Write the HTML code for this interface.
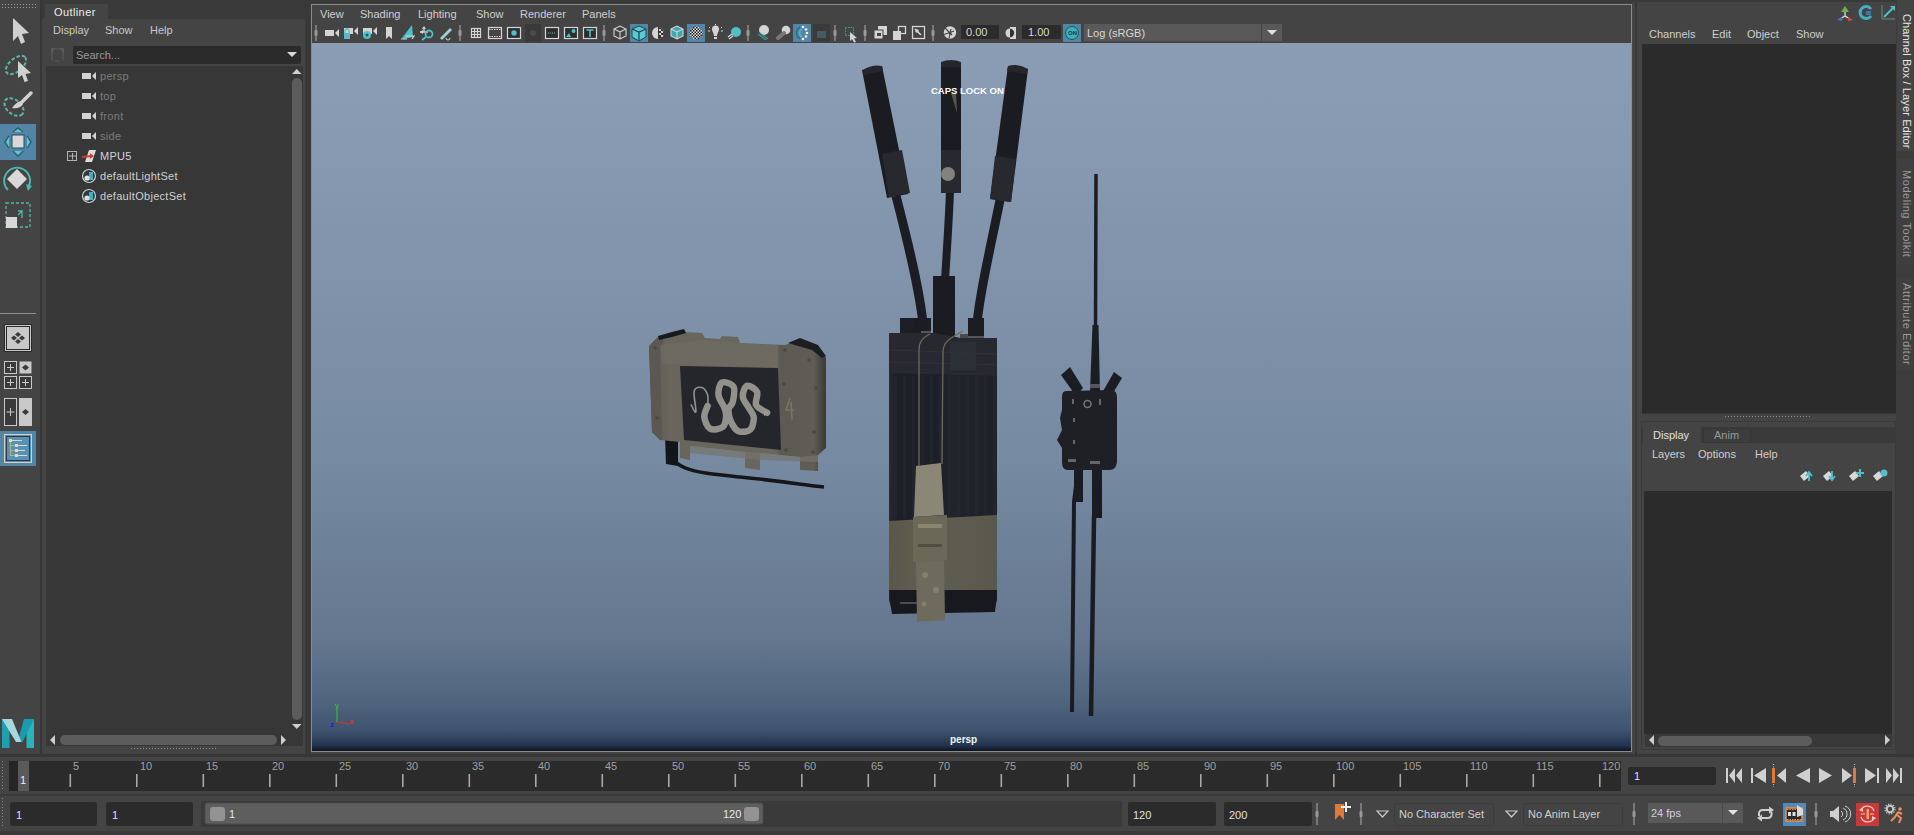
<!DOCTYPE html>
<html><head><meta charset="utf-8">
<style>
*{margin:0;padding:0;box-sizing:border-box}
html,body{width:1914px;height:835px;overflow:hidden;background:#444;font-family:"Liberation Sans",sans-serif;font-size:11px;color:#c8c8c8}
.a{position:absolute}
.t{position:absolute;white-space:nowrap;line-height:1}
svg{position:absolute;left:0;top:0}
</style></head><body>

<div class="a" style="left:0px;top:0px;width:1914px;height:835px;background:#444;"></div>
<div class="a" style="left:40px;top:0px;width:2px;height:755px;background:#363636;"></div>
<div class="a" style="left:42px;top:0px;width:264px;height:19px;background:#3a3a3a;"></div>
<div class="a" style="left:45px;top:4px;width:63px;height:15px;background:#444;border-radius:2px 2px 0 0"></div>
<div class="t" style="left:54px;top:7px;color:#ececec;font-size:11px;letter-spacing:0.4px">Outliner</div>
<div class="a" style="left:42px;top:19px;width:264px;height:736px;background:#444;"></div>
<div class="t" style="left:53px;top:25px;color:#c8c8c8;font-size:11px;">Display</div>
<div class="t" style="left:105px;top:25px;color:#c8c8c8;font-size:11px;">Show</div>
<div class="t" style="left:150px;top:25px;color:#c8c8c8;font-size:11px;">Help</div>
<div class="a" style="left:73px;top:46px;width:228px;height:18px;background:#2b2b2b;border-radius:2px"></div>
<div class="t" style="left:76px;top:50px;color:#9a9a9a;font-size:11px;">Search...</div>
<div class="a" style="left:46px;top:66px;width:257px;height:680px;background:#373737;"></div>
<div class="a" style="left:305px;top:0px;width:6px;height:755px;background:#393939;"></div>
<div class="a" style="left:306px;top:0px;width:1326px;height:4px;background:#3a3a3a;"></div>
<div class="a" style="left:311px;top:4px;width:1321px;height:748px;background:#444;border:1px solid #8c8c8c"></div>
<div class="a" style="left:312px;top:43px;width:1319px;height:708px;background:linear-gradient(#8a9db4 0px,#8699b0 117px,#7d90a8 297px,#768aa2 417px,#64778f 597px,#52657f 657px,#3f5470 687px,#243450 702px,#0e1420 708px);"></div>
<div class="a" style="left:1632px;top:0px;width:4px;height:755px;background:#444;"></div>
<div class="a" style="left:1635px;top:0px;width:2px;height:755px;background:#383838;"></div>
<div class="a" style="left:1637px;top:0px;width:5px;height:755px;background:#444;"></div>
<div class="a" style="left:1632px;top:0px;width:282px;height:2px;background:#3a3a3a;"></div>
<div class="a" style="left:1642px;top:413px;width:254px;height:1px;background:#333;"></div>
<div class="a" style="left:1642px;top:44px;width:254px;height:369px;background:#2b2b2b;"></div>
<div class="a" style="left:1642px;top:427px;width:254px;height:16px;background:#3a3a3a;"></div>
<div class="a" style="left:1643px;top:427px;width:58px;height:16px;background:#444;"></div>
<div class="a" style="left:1703px;top:428px;width:48px;height:15px;background:#3d3d3d;border:1px solid #353535"></div>
<div class="a" style="left:1644px;top:491px;width:248px;height:243px;background:#2b2b2b;"></div>
<div class="a" style="left:1645px;top:734px;width:247px;height:13px;background:#393939;"></div>
<div class="a" style="left:1896px;top:0px;width:18px;height:755px;background:#3c3c3c;"></div>
<div class="a" style="left:0px;top:754px;width:1914px;height:3px;background:#363636;"></div>
<div class="a" style="left:9px;top:761px;width:1612px;height:30px;background:#2b2b2b;"></div>
<div class="a" style="left:0px;top:794px;width:1914px;height:2px;background:#3a3a3a;"></div>
<div class="a" style="left:0px;top:831px;width:1914px;height:4px;background:#3a3a3a;"></div>
<div class="t" style="left:100px;top:71px;color:#7c7c7c;font-size:11px;letter-spacing:0.3px">persp</div>
<div class="t" style="left:100px;top:91px;color:#7c7c7c;font-size:11px;letter-spacing:0.3px">top</div>
<div class="t" style="left:100px;top:111px;color:#7c7c7c;font-size:11px;letter-spacing:0.3px">front</div>
<div class="t" style="left:100px;top:131px;color:#7c7c7c;font-size:11px;letter-spacing:0.3px">side</div>
<div class="t" style="left:100px;top:151px;color:#cfd0e0;font-size:11px;letter-spacing:0.3px">MPU5</div>
<div class="t" style="left:100px;top:171px;color:#d0d0d0;font-size:11px;letter-spacing:0.3px">defaultLightSet</div>
<div class="t" style="left:100px;top:191px;color:#d0d0d0;font-size:11px;letter-spacing:0.3px">defaultObjectSet</div>
<svg width="1914" height="835"><rect x="82" y="73" width="9" height="6" fill="#d2d2d2"/><path d="M92 76 L96 72 L96 80 Z" fill="#d2d2d2"/><rect x="82" y="93" width="9" height="6" fill="#d2d2d2"/><path d="M92 96 L96 92 L96 100 Z" fill="#d2d2d2"/><rect x="82" y="113" width="9" height="6" fill="#d2d2d2"/><path d="M92 116 L96 112 L96 120 Z" fill="#d2d2d2"/><rect x="82" y="133" width="9" height="6" fill="#d2d2d2"/><path d="M92 136 L96 132 L96 140 Z" fill="#d2d2d2"/><rect x="67.5" y="151.5" width="9" height="9" fill="none" stroke="#b4b4b4" stroke-width="1"/><path d="M69 156 H76 M72.5 153 V159.5" stroke="#b4b4b4" stroke-width="1"/><path d="M85 162 L89 150 L96 150 L92 162 Z" fill="#dcdcdc"/><path d="M82 157 L92 156" stroke="#d23a3a" stroke-width="1.8"/><path d="M90 153 L94 156 L90 159 Z" fill="#d23a3a"/><circle cx="89" cy="176" r="6.5" fill="#2e3a3e" stroke="#d0d0d0" stroke-width="1.2"/><path d="M89 172 L93 172 L93 180 L89 180 Z" fill="#3fb0c0"/><circle cx="87" cy="178" r="2.6" fill="#e0e0e0"/><circle cx="89" cy="196" r="6.5" fill="#2e3a3e" stroke="#d0d0d0" stroke-width="1.2"/><path d="M89 192 L93 192 L93 200 L89 200 Z" fill="#3fb0c0"/><circle cx="87" cy="198" r="2.6" fill="#e0e0e0"/><g fill="none" stroke="#5a5a5a" stroke-width="1.2"><path d="M52 49 L52 61 M55 49 H60 M55 61 H60 M63 49 L63 61"/></g><path d="M51 48 L56 48 L51 53 Z M64 48 L59 48 L64 53 Z" fill="#5a5a5a"/><path d="M287 52 L297 52 L292 57 Z" fill="#d8d8d8"/><path d="M292 74 L301.5 74 L296.75 69 Z" fill="#cfcfcf"/><rect x="292" y="78" width="10" height="642" rx="5" fill="#5c5c5c"/><path d="M292 724 L301.5 724 L296.75 729 Z" fill="#cfcfcf"/><path d="M55 735 L55 745 L50 740 Z" fill="#cfcfcf"/><rect x="60" y="735" width="217" height="10" rx="5" fill="#5c5c5c"/><path d="M281 735 L281 745 L286 740 Z" fill="#cfcfcf"/><line x1="131" y1="748.5" x2="216" y2="748.5" stroke="#8a8a8a" stroke-width="1" stroke-dasharray="1 2"/></svg>
<svg width="1914" height="835"><line x1="2" y1="4.5" x2="36" y2="4.5" stroke="#9a9a9a" stroke-dasharray="1 2"/><line x1="2" y1="7.5" x2="36" y2="7.5" stroke="#9a9a9a" stroke-dasharray="1 2"/><path d="M13 18 L29 33 L22 34 L25 42 L21 44 L18 36 L13 41 Z" fill="#d0d0d0"/><ellipse cx="16" cy="65" rx="12" ry="6.5" transform="rotate(-40 16 65)" fill="none" stroke="#5ab8aa" stroke-width="2" stroke-dasharray="3.5 2"/><path d="M18 61 L31 73 L25.5 74 L28 81 L24.5 82 L22 75 L18 78 Z" fill="#d0d0d0"/><ellipse cx="14" cy="107" rx="11" ry="7" transform="rotate(40 14 107)" fill="none" stroke="#5ab8aa" stroke-width="2" stroke-dasharray="3.5 2"/><path d="M31 93 L22 102" stroke="#d0d0d0" stroke-width="3.5" stroke-linecap="round"/><path d="M21 101 C17 102 14 105 12 108 C16 109 21 108 23 104 Z" fill="#d8d0d0"/><rect x="0" y="124" width="36" height="36" fill="#5285a6"/><rect x="12" y="135" width="12" height="13" fill="#d8d8d8" stroke="#2a4a5a" stroke-width="1"/><g fill="none" stroke="#2a6070" stroke-width="1.5"><path d="M13 132 L18 128 L23 132"/><path d="M13 151 L18 156 L23 151"/><path d="M9 136 L5 142 L9 148"/><path d="M27 136 L31 142 L27 148"/></g><g fill="#5fc8d0"><path d="M14 132 L18 129 L22 132Z"/><path d="M14 151 L18 155 L22 151Z"/><path d="M9 137 L6 142 L9 147Z"/><path d="M27 137 L30 142 L27 147Z"/></g><path d="M8 190 A13 13 0 1 1 29 186" fill="none" stroke="#4fb8b0" stroke-width="1.8"/><path d="M26 184 L32 186 L28 191 Z" fill="#4fb8b0"/><path d="M17 169 L27 179 L17 189 L7 179 Z" fill="#d8d8d8"/><rect x="6" y="203" width="24" height="24" fill="none" stroke="#4fb8b0" stroke-width="1.3" stroke-dasharray="3 2"/><rect x="6" y="217" width="11" height="11" fill="#d8d8d8"/><path d="M18 215 L22 211 L22 218 M18 211 L22 211" fill="none" stroke="#4fb8b0" stroke-width="1.3"/><line x1="0" y1="313.5" x2="36" y2="313.5" stroke="#8e8e8e" stroke-width="1.2"/><rect x="4.5" y="324.5" width="27" height="27" fill="#c8c8c8" stroke="#2a2a2a"/><rect x="6.5" y="326.5" width="23" height="23" fill="none" stroke="#2a2a2a" stroke-width="1"/><g fill="#3a3a3a"><path d="M18 332 L21 334.5 L18 337 L15 334.5Z"/><path d="M18 339 L21 341.5 L18 344 L15 341.5Z"/><path d="M14 335.5 L17 338 L14 340.5 L11 338Z"/><path d="M22 335.5 L25 338 L22 340.5 L19 338Z"/></g><rect x="4.5" y="361.5" width="12" height="12" fill="#3a3a3a" stroke="#c8c8c8"/><path d="M10.5 364 V371 M7 367.5 H14" stroke="#c8c8c8" stroke-width="1"/><rect x="19.5" y="361.5" width="12" height="12" fill="#c8c8c8"/><path d="M25.5 364.5 L29 367.5 L25.5 370.5 L22 367.5Z" fill="#3a3a3a"/><rect x="4.5" y="376.5" width="12" height="12" fill="#3a3a3a" stroke="#c8c8c8"/><path d="M10.5 379 V386 M7 382.5 H14" stroke="#c8c8c8" stroke-width="1"/><rect x="19.5" y="376.5" width="12" height="12" fill="#3a3a3a" stroke="#c8c8c8"/><path d="M25.5 379 V386 M22 382.5 H29" stroke="#c8c8c8" stroke-width="1"/><rect x="4.5" y="398.5" width="12" height="27" fill="#3a3a3a" stroke="#c8c8c8"/><path d="M10.5 408 V416 M6.5 412 H14.5" stroke="#c8c8c8"/><rect x="19" y="398" width="13" height="28" fill="#c8c8c8"/><path d="M25.5 409 L29 412 L25.5 415 L22 412Z" fill="#3a3a3a"/><rect x="0" y="431" width="36" height="35" fill="#5285a6"/><rect x="4.5" y="434.5" width="27" height="28" fill="#5a90b0" stroke="#d0d0d0"/><rect x="6.5" y="436.5" width="23" height="24" fill="none" stroke="#2a3a44"/><g fill="#d8d8d8"><rect x="9" y="439" width="3" height="3"/><rect x="12" y="440" width="10" height="1"/><rect x="15" y="444" width="3" height="3"/><rect x="18" y="445" width="9" height="1"/><rect x="15" y="449" width="3" height="3"/><rect x="18" y="450" width="7" height="1"/><rect x="15" y="454" width="3" height="3"/><rect x="18" y="455" width="9" height="1"/></g><path d="M10.5 442 V456 M10.5 445.5 H15 M10.5 450.5 H15 M10.5 455.5 H15" stroke="#c0c080" stroke-width="0.8" fill="none"/><defs><linearGradient id="mg" x1="0" y1="0" x2="1" y2="1"><stop offset="0" stop-color="#7fd8e0"/><stop offset="0.5" stop-color="#1a9aaa"/><stop offset="1" stop-color="#5cc8d4"/></linearGradient></defs><path d="M2 719 L9.5 719 L9.5 748 L2 748 Z" fill="#1f9fb5"/><path d="M26.5 719 L34 719 L34 748 L26.5 748 Z" fill="#2bb3b8"/><path d="M24 719 L34 719 L22.5 742 L17.5 742 Z" fill="#1a9cb0"/><path d="M2 719 L12 719 L21.5 742 L16 742 Z" fill="#a9d6dc"/></svg>
<div class="t" style="left:320px;top:9px;color:#cfcfcf;font-size:11px;">View</div>
<div class="t" style="left:360px;top:9px;color:#cfcfcf;font-size:11px;">Shading</div>
<div class="t" style="left:418px;top:9px;color:#cfcfcf;font-size:11px;">Lighting</div>
<div class="t" style="left:476px;top:9px;color:#cfcfcf;font-size:11px;">Show</div>
<div class="t" style="left:520px;top:9px;color:#cfcfcf;font-size:11px;">Renderer</div>
<div class="t" style="left:582px;top:9px;color:#cfcfcf;font-size:11px;">Panels</div>
<svg width="1914" height="835"><rect x="315.25" y="25" width="1.5" height="16" fill="#8a8a8a"/><rect x="314.5" y="30" width="3" height="6" rx="1" fill="#9a9a9a"/><rect x="325" y="30" width="9" height="6" fill="#d4d4d4"/><path d="M335 33 L339 29 L339 37Z" fill="#d4d4d4"/><rect x="344" y="28" width="9" height="6" fill="#d4d4d4"/><path d="M354 31 L358 27 L358 35Z" fill="#d4d4d4"/><rect x="344" y="33" width="6" height="6" fill="#4fc0c8"/><path d="M345 33 V31 A2 2 0 0 1 349 31 V33" fill="none" stroke="#4fc0c8" stroke-width="1.3"/><rect x="363" y="28" width="9" height="6" fill="#d4d4d4"/><path d="M373 31 L377 27 L377 35Z" fill="#d4d4d4"/><circle cx="367" cy="35" r="4" fill="#4fc0c8"/><circle cx="367" cy="35" r="1.5" fill="#2a5a60"/><path d="M386 27 H392 V39 L389 36 L386 39Z" fill="#d4d4d4"/><path d="M402 38 L412 25 L413 37 L404 39Z" fill="#4fc0c8"/><path d="M401 39 H407 M406 36 H414 L412 39" stroke="#d4d4d4" stroke-width="1.2" fill="none"/><path d="M420 32 L428 32 M424 28 L424 32" stroke="#d4d4d4" stroke-width="1.3"/><path d="M420 32 L423 30 L423 34Z M424 26 L422 29 L426 29Z" fill="#d4d4d4"/><circle cx="429" cy="34" r="3.5" fill="none" stroke="#4fc0c8" stroke-width="1.8"/><path d="M426 37 L422 40" stroke="#4fc0c8" stroke-width="1.8"/><path d="M440 38 L450 28 L452 30 L442 40Z" fill="#9fd0d0"/><path d="M446 38 A2 2 0 1 0 450 38" stroke="#d4d4d4" fill="none" stroke-width="1"/><rect x="459.25" y="25" width="1.5" height="16" fill="#8a8a8a"/><rect x="458.5" y="30" width="3" height="6" rx="1" fill="#9a9a9a"/><g fill="none" stroke="#d4d4d4" stroke-width="1.2"><rect x="471.5" y="28.5" width="9" height="9"/><path d="M474.5 28.5 V37.5 M477.5 28.5 V37.5 M471.5 31.5 H480.5 M471.5 34.5 H480.5"/></g><rect x="488.5" y="27.5" width="13" height="11" fill="none" stroke="#d4d4d4" stroke-width="1.2"/><path d="M489 29.5 H501 M489 36.5 H501" stroke="#d4d4d4" stroke-dasharray="1.5 1"/><rect x="507.5" y="27.5" width="13" height="11" fill="#2e2e2e" stroke="#d4d4d4" stroke-width="1.2"/><circle cx="514" cy="33" r="2.7" fill="#4fc0c8"/><rect x="525" y="24" width="16" height="18" fill="#3a3a3a"/><circle cx="533" cy="33" r="3" fill="#4a4a4a"/><rect x="545.5" y="27.5" width="13" height="11" fill="#2e2e2e" stroke="#d4d4d4" stroke-width="1.2"/><path d="M548 33 H556" stroke="#4fc0c8" stroke-dasharray="1 1"/><rect x="564.5" y="27.5" width="13" height="11" fill="#2e2e2e" stroke="#d4d4d4" stroke-width="1.2"/><path d="M566 37 L569 33 L571 37Z" fill="#4fc0c8"/><circle cx="573.5" cy="31" r="2" fill="#4fc0c8"/><rect x="583.5" y="27.5" width="13" height="11" fill="#2e2e2e" stroke="#d4d4d4" stroke-width="1.2"/><path d="M586.5 30 H593.5 M590 30 V37" stroke="#4fc0c8" stroke-width="1.6"/><rect x="603.25" y="25" width="1.5" height="16" fill="#8a8a8a"/><rect x="602.5" y="30" width="3" height="6" rx="1" fill="#9a9a9a"/><path d="M614 29 L620 26 L626 29 L626 36 L620 39 L614 36Z M614 29 L620 32 L626 29 M620 32 V39" fill="none" stroke="#d4d4d4" stroke-width="1.1"/><rect x="630" y="24" width="18" height="18" fill="#5285a6"/><path d="M632 29 L639 26 L646 29 L646 37 L639 41 L632 37Z" fill="#5cc8d0"/><path d="M632 29 L639 32 L646 29 M639 32 V41" fill="none" stroke="#1a4a55" stroke-width="1.3"/><path d="M632 29 L639 26 L646 29 L646 37 L639 41 L632 37Z" fill="none" stroke="#1a4a55" stroke-width="1"/><circle cx="658" cy="33" r="6" fill="#d4d4d4"/><path d="M658 27 A6 6 0 0 1 658 39Z" fill="#333"/><g fill="#d4d4d4"><rect x="659" y="29" width="2" height="2"/><rect x="661" y="31" width="2" height="2"/><rect x="659" y="33" width="2" height="2"/><rect x="661" y="35" width="2" height="2"/></g><path d="M671 29 L677 26 L683 29 L683 36 L677 39 L671 36Z" fill="#3fa8b0"/><path d="M671 29 L677 26 L683 29 L683 36 L677 39 L671 36Z M671 29 L677 32 L683 29 M677 32 V39" fill="none" stroke="#d4d4d4" stroke-width="1.1"/><rect x="687" y="24" width="18" height="18" fill="#5285a6"/><defs><pattern id="chk" width="3" height="3" patternUnits="userSpaceOnUse"><rect width="3" height="3" fill="#eee"/><rect width="1.5" height="1.5" fill="#111"/><rect x="1.5" y="1.5" width="1.5" height="1.5" fill="#111"/></pattern></defs><circle cx="696" cy="33" r="6.5" fill="url(#chk)"/><path d="M712 29 A3.5 3.5 0 1 1 719 29 C719 32 717 33 717 36 H714 C714 33 712 32 712 29Z" fill="#d4d4d4"/><rect x="714" y="37" width="3" height="2" fill="#d4d4d4"/><g stroke="#d4d4d4" stroke-width="1"><path d="M708 31 H710 M721 31 H723 M709 27 L710 28 M722 27 L721 28 M715.5 24 V25"/></g><circle cx="736" cy="32" r="5" fill="#4fc0c8"/><path d="M728 37 L732 34 M729 39 L733 36" stroke="#d4d4d4" stroke-width="1.2"/><rect x="747.25" y="25" width="1.5" height="16" fill="#8a8a8a"/><rect x="746.5" y="30" width="3" height="6" rx="1" fill="#9a9a9a"/><circle cx="764" cy="30" r="5" fill="#d4d4d4"/><path d="M758 34 L766 40 M760 33 L768 39" stroke="#3a9aa0" stroke-width="1.2"/><circle cx="786" cy="30" r="4.3" fill="#d4d4d4"/><path d="M778 38 L784 33" stroke="#777" stroke-width="4" stroke-linecap="round"/><rect x="793" y="24" width="18" height="18" fill="#5285a6"/><path d="M800 27 A7 7 0 0 0 800 39" fill="none" stroke="#2a6a75" stroke-width="1.3"/><path d="M802 29 A4.5 4.5 0 0 0 802 37" fill="none" stroke="#4fc0c8" stroke-width="1.3"/><g fill="#f0f0f0"><circle cx="803" cy="27" r="1.3"/><circle cx="806" cy="29.5" r="1.3"/><circle cx="807" cy="33" r="1.3"/><circle cx="806" cy="36.5" r="1.3"/><circle cx="803" cy="39" r="1.3"/></g><rect x="813" y="24" width="17" height="18" fill="#3a3a3a"/><rect x="817" y="31" width="9" height="7" fill="#475a62"/><rect x="834.25" y="25" width="1.5" height="16" fill="#8a8a8a"/><rect x="833.5" y="30" width="3" height="6" rx="1" fill="#9a9a9a"/><rect x="845.5" y="27.5" width="8" height="8" fill="none" stroke="#4a9a9a" stroke-dasharray="1.5 1"/><path d="M850 32 L857 38 L854 38.5 L856 42 L854 42.5 L852 39 L850 41Z" fill="#d4d4d4"/><rect x="864.25" y="25" width="1.5" height="16" fill="#8a8a8a"/><rect x="863.5" y="30" width="3" height="6" rx="1" fill="#9a9a9a"/><rect x="878" y="26" width="9" height="9" fill="#d4d4d4"/><rect x="874" y="30" width="9" height="9" fill="#d4d4d4" stroke="#444" stroke-width="1"/><rect x="877" y="33" width="4" height="3" fill="#444"/><rect x="898.5" y="26.5" width="7" height="7" fill="none" stroke="#d4d4d4" stroke-width="1.3"/><rect x="893" y="31" width="8" height="9" fill="#d4d4d4"/><rect x="912.5" y="26.5" width="12" height="12" fill="none" stroke="#d4d4d4" stroke-width="1.3"/><path d="M915 29 L921 35" stroke="#d4d4d4" stroke-width="1.5"/><circle cx="917" cy="31" r="1.8" fill="#d4d4d4"/><rect x="932.25" y="25" width="1.5" height="16" fill="#8a8a8a"/><rect x="931.5" y="30" width="3" height="6" rx="1" fill="#9a9a9a"/><circle cx="950" cy="32.5" r="6.2" fill="#d4d4d4"/><g stroke="#444" stroke-width="1.1"><path d="M945 28 L952 35"/><path d="M944 34.5 L954 31"/><path d="M949 38.5 L951 29"/></g><circle cx="950" cy="33" r="1.5" fill="#444"/><rect x="961" y="25" width="38" height="14" rx="1" fill="#2b2b2b"/><path d="M1010 28.5 A4.5 4.5 0 0 0 1010 37.5Z" fill="#d4d4d4"/><rect x="1010" y="27" width="6" height="12" fill="#d4d4d4"/><path d="M1010 28.8 A4.2 4.2 0 0 1 1010 37.2Z" fill="#333"/><rect x="1022" y="25" width="39" height="14" rx="1" fill="#2b2b2b"/><rect x="1063" y="24" width="18" height="18" fill="#5285a6"/><circle cx="1072" cy="33" r="6.5" fill="#3fb0b8" stroke="#1a5560" stroke-width="1"/><rect x="1084" y="24" width="177" height="17" fill="#595959"/><rect x="1262" y="24" width="20" height="17" fill="#595959"/><path d="M1267 30 L1277 30 L1272 35Z" fill="#e0e0e0"/></svg>
<div class="t" style="left:966px;top:27px;color:#d8d8d8;font-size:11px;">0.00</div>
<div class="t" style="left:1028px;top:27px;color:#d8d8d8;font-size:11px;">1.00</div>
<div class="t" style="left:1068px;top:30px;color:#173a40;font-size:6px;font-weight:bold">ON</div>
<div class="t" style="left:1087px;top:28px;color:#d8d8d8;font-size:11px;">Log (sRGB)</div>
<svg width="1914" height="835">
<defs><clipPath id="vpc"><rect x="312" y="43" width="1319" height="708"/></clipPath>
<linearGradient id="bodyg" x1="0" y1="0" x2="1" y2="0"><stop offset="0" stop-color="#282a33"/><stop offset="0.07" stop-color="#1d1f27"/><stop offset="0.5" stop-color="#1e2028"/><stop offset="0.56" stop-color="#22242c"/><stop offset="1" stop-color="#1f2129"/></linearGradient>
<linearGradient id="tang" x1="0" y1="0" x2="1" y2="0"><stop offset="0" stop-color="#59564b"/><stop offset="0.3" stop-color="#615e52"/><stop offset="1" stop-color="#5a574c"/></linearGradient>
<linearGradient id="ltg" x1="0" y1="0" x2="1" y2="0"><stop offset="0" stop-color="#5a5850"/><stop offset="0.1" stop-color="#67655c"/><stop offset="0.72" stop-color="#6a675f"/><stop offset="0.74" stop-color="#5c5a52"/><stop offset="0.93" stop-color="#5f5d55"/><stop offset="1" stop-color="#3a3936"/></linearGradient>
</defs>
<g clip-path="url(#vpc)">
<!-- ===== left device ===== -->
<path d="M668 441 C668 470 690 472 740 477 C780 481 805 485 824 487" stroke="#15161b" stroke-width="3.5" fill="none"/>
<path d="M665 436 L666 464 L678 466 L678 440 Z" fill="#141519"/>
<path d="M649 346 L658 337 L684 332 L702 333 L705 338 L720 339 L722 336 L738 337 L740 343 L785 345 L800 340 L818 347 L826 358 L826 448 L818 455 L818 471 L800 470 L800 457 L760 453 L760 470 L745 468 L745 452 L690 446 L690 460 L680 458 L680 442 L660 440 L652 432 Z" fill="url(#ltg)"/>
<path d="M690 446 L745 452 L760 453 L800 457 L818 455 L818 462 L760 460 L690 453 Z" fill="#77746a" opacity="0.7"/>
<path d="M649 346 L658 337 L664 340 L660 350 L662 440 L660 440 L652 432 Z" fill="#5a5850"/>
<path d="M658 336 L672 332 L684 329 L686 333 L672 337 L659 340 Z" fill="#18191d"/>
<path d="M788 343 L800 338 L818 345 L826 356 L822 358 L812 350 Z" fill="#1d1e22"/>
<path d="M660 345 L702 340 L778 346 L778 368 L662 364 Z" fill="#716e65" opacity="0.55"/>
<path d="M680 366 L778 368 L781 450 L684 440 Z" fill="#25262b"/>
<g fill="#4a4840"><circle cx="655" cy="348" r="1.8"/><circle cx="657" cy="418" r="1.8"/><circle cx="785" cy="350" r="1.8"/><circle cx="809" cy="360" r="1.8"/><circle cx="784" cy="384" r="1.8"/><circle cx="816" cy="388" r="1.8"/><circle cx="814" cy="432" r="1.8"/><circle cx="786" cy="450" r="1.8"/><circle cx="813" cy="452" r="1.8"/></g>
<path d="M690.9 404.4 C691.7 405.6 695.3 414.1 695.9 411.9 C696.5 409.7 693.2 395.1 694.2 391.0 C695.2 386.9 699.6 386.9 701.8 387.6 C704.0 388.3 706.6 392.0 707.6 395.1 C708.6 398.2 707.6 404.2 707.6 406.0" fill="none" stroke="#94938d" stroke-width="1.6"/>
<path d="M707.6 406.0 C707.0 407.8 703.9 413.1 704.3 416.9 C704.7 420.7 707.0 427.0 710.1 428.7 C713.2 430.4 720.0 429.0 722.7 427.0 C725.4 425.0 725.8 420.1 726.1 416.9 C726.4 413.7 725.7 411.3 724.4 407.7 C723.1 404.1 718.9 399.3 718.5 395.1 C718.1 390.9 719.4 384.0 721.9 382.6 C724.4 381.2 731.8 383.6 733.6 386.8 C735.4 390.0 733.6 398.1 732.8 401.9 C732.0 405.7 728.9 406.0 728.6 409.4 C728.3 412.8 729.4 418.4 731.1 422.0 C732.8 425.6 735.4 429.9 738.6 431.2 C741.8 432.4 747.9 431.9 750.4 429.5 C752.9 427.1 754.0 420.5 753.7 416.9 C753.4 413.3 750.5 411.0 748.7 407.7 C746.9 404.4 743.1 400.4 742.8 396.8 C742.5 393.2 744.6 386.7 747.0 385.9 C749.4 385.1 755.6 388.6 757.1 391.8 C758.6 395.0 754.5 401.7 756.2 405.2 C757.9 408.7 765.3 411.4 767.1 412.7" fill="none" stroke="#92918c" stroke-width="6.5" stroke-linecap="round"/>
<path d="M764 410 L770 413 L764 416Z" fill="#9a9994"/>
<path d="M790 398 L786 410 L794 410 M791 402 L792 420" stroke="#77746a" stroke-width="1.6" fill="none"/>
<!-- ===== center device antennas ===== -->
<g fill="none">
<path d="M896 196 C910 250 922 300 924 335" stroke="#1c1d23" stroke-width="9"/>
<path d="M950 192 C948 240 944 290 944 300" stroke="#1c1d23" stroke-width="8"/>
<path d="M1000 200 C990 250 978 300 976 335" stroke="#1c1d23" stroke-width="9"/>
</g>
<path d="M862 70 L882 66 L908 194 L887 198 Z" fill="#1b1c21"/>
<path d="M863 70 Q872 64 882 66 L883 71 L864 75 Z" fill="#26272d"/>
<path d="M941 62 L961 62 L961 193 L941 193 Z" fill="#1b1c21"/>
<path d="M941 62 Q951 58 961 62 L961 67 L941 67 Z" fill="#26272d"/>
<path d="M1008 66 L1028 69 L1011 202 L990 199 Z" fill="#1b1c21"/>
<path d="M1008 66 Q1018 63 1028 69 L1027 74 L1007 71 Z" fill="#26272d"/>
<path d="M882 154 L902 150 L910 193 L889 197 Z" fill="#28292f"/>
<rect x="941" y="150" width="20" height="43" fill="#28292f"/>
<path d="M995 156 L1016 159 L1011 202 L990 199 Z" fill="#28292f"/>
<circle cx="948" cy="174" r="7" fill="#8e8c86" opacity="0.9"/>
<path d="M951 93 L956 92 L957 113 Z" fill="#6e6955" opacity="0.75"/>
<!-- center stub + connectors -->
<rect x="933" y="276" width="22" height="64" fill="#1b1c21"/>
<rect x="912" y="318" width="19" height="18" fill="#1c1d22"/>
<rect x="900" y="318" width="13" height="16" fill="#1e1f24"/>
<rect x="968" y="318" width="16" height="20" fill="#1c1d22"/>
<rect x="921" y="331" width="10" height="4" fill="#55565a"/>
<rect x="968" y="336" width="16" height="4" fill="#55565a"/>
<rect x="960" y="334" width="8" height="10" fill="#4a4b50"/>
<!-- body -->
<path d="M889 333 L935 333 L960 338 L997 338 L997 600 L994 612 L892 612 L889 600 Z" fill="url(#bodyg)"/>
<path d="M889 333 L935 333 L960 338 L997 338 L997 376 L889 373 Z" fill="#272830"/><path d="M889 350 L997 354 M889 362 L997 365" stroke="#30313a" stroke-width="1"/><rect x="950" y="342" width="26" height="28" fill="#30313a" opacity="0.8"/><rect x="894" y="376" width="3" height="142" fill="#262832" opacity="0.6"/><rect x="903" y="376" width="3" height="142" fill="#262832" opacity="0.6"/><rect x="912" y="376" width="3" height="142" fill="#262832" opacity="0.6"/><rect x="921" y="376" width="3" height="142" fill="#262832" opacity="0.6"/><rect x="930" y="376" width="3" height="142" fill="#262832" opacity="0.6"/><rect x="939" y="376" width="3" height="142" fill="#262832" opacity="0.6"/><rect x="948" y="376" width="3" height="142" fill="#262832" opacity="0.6"/><rect x="957" y="376" width="3" height="142" fill="#262832" opacity="0.6"/><rect x="966" y="376" width="3" height="142" fill="#262832" opacity="0.6"/><rect x="975" y="376" width="3" height="142" fill="#262832" opacity="0.6"/><rect x="984" y="376" width="3" height="142" fill="#262832" opacity="0.6"/><rect x="993" y="376" width="3" height="142" fill="#262832" opacity="0.6"/>
<path d="M889 521 L997 515 L997 590 L992 597 L893 599 L889 592 Z" fill="url(#tang)"/>
<path d="M889 590 L997 590 L995 612 L892 614 Z" fill="#18191f"/>
<path d="M900 603 L920 603" stroke="#4a4b55" stroke-width="2"/>
<!-- strap -->
<path d="M916 466 L941 463 L944 515 L914 517 Z" fill="#8a8776"/>
<path d="M913 517 L947 515 L947 560 L913 562 Z" fill="#6c6857"/>
<rect x="918" y="524" width="24" height="4" fill="#8a8572"/>
<rect x="918" y="544" width="24" height="3" fill="#4f4c42"/>
<path d="M916 562 L944 560 L945 620 L917 622 Z" fill="#6e6b5d"/>
<g fill="#89866f" opacity="0.8"><circle cx="925" cy="575" r="3"/><circle cx="936" cy="590" r="3"/><circle cx="924" cy="604" r="2.5"/></g>
<g stroke="#6f6a56" stroke-width="1.3" fill="none">
<path d="M930 334 C922 338 919 342 919 350 L919 466"/><path d="M963 331 C950 338 943 342 943 352 L942 464"/>
</g>
<!-- ===== right device ===== -->
<path d="M1096 174 L1095.5 330" stroke="#1c1d23" stroke-width="3.5"/>
<path d="M1092.5 325 L1098.5 325 L1100 392 L1090 392Z" fill="#1c1d23"/>
<rect x="1090" y="384" width="10" height="4" fill="#55565a"/>
<path d="M1078 470 L1074 502 L1072 712" stroke="#1b1c21" stroke-width="4" fill="none"/>
<path d="M1097 470 L1094 518 L1091 716" stroke="#1b1c21" stroke-width="4.5" fill="none"/>
<rect x="1074" y="468" width="9" height="34" fill="#1b1c21"/>
<rect x="1092" y="468" width="10" height="50" fill="#1b1c21"/>
<path d="M1061 375 L1070 367 L1083 388 L1076 396 Z" fill="#1c1d23"/>
<path d="M1114 372 L1122 378 L1110 398 L1102 393 Z" fill="#1c1d23"/>
<path d="M1066 391 L1112 390 Q1117 391 1117 397 L1117 462 Q1116 470 1110 470 L1068 470 Q1062 470 1062 462 L1062 448 L1057 440 L1062 430 L1060 418 L1062 410 L1062 397 Q1062 391 1066 391Z" fill="#1f2026"/>
<circle cx="1087.5" cy="404" r="3.5" fill="none" stroke="#77777a" stroke-width="1.5"/>
<g fill="#66666a"><rect x="1072" y="399" width="2" height="5"/><rect x="1099" y="399" width="2" height="6"/><rect x="1073" y="418" width="2" height="4"/><rect x="1073" y="440" width="2" height="4"/><rect x="1068" y="459" width="8" height="3"/><rect x="1090" y="461" width="10" height="3"/></g>
<text x="931" y="94" font-family="Liberation Sans" font-weight="bold" font-size="9.5" fill="#ffffff">CAPS LOCK ON</text>
<!-- axis -->
<path d="M337 722 V708" stroke="#40c040" stroke-width="1"/><path d="M337 722 L349 724" stroke="#e03030" stroke-width="1.2"/>
<text x="335" y="708" font-family="Liberation Sans" font-size="8" fill="#40c040">y</text>
<text x="330" y="727" font-family="Liberation Sans" font-size="8" font-weight="bold" fill="#2020e0">z</text>
<text x="349" y="724" font-family="Liberation Sans" font-size="8" font-weight="bold" fill="#e03030">x</text>
</g>
</svg>

<div class="t" style="left:950px;top:735px;color:#f4f4f4;font-size:10px;font-weight:bold">persp</div>
<svg width="1914" height="835"><path d="M1845 6 L1849 12 L1841 12Z" fill="#6ab04c"/><path d="M1845 12 V16 L1840 19 M1845 16 L1850 19" stroke="#e8e8e8" stroke-width="1.2" fill="none"/><path d="M1837 20 L1842 17 L1842 21Z" fill="#4a70c8"/><path d="M1853 20 L1848 17 L1848 21Z" fill="#d84848"/><path d="M1871 16 A6 6 0 1 1 1871 9" fill="none" stroke="#3fb0c0" stroke-width="3"/><rect x="1866" y="11" width="5" height="4" fill="#3a7aa0"/><path d="M1882 5 V19 H1895" stroke="#6a8a8a" fill="none" stroke-width="1"/><path d="M1884 17 L1894 7" stroke="#4fc0c8" stroke-width="2"/><path d="M1890 6 L1895 6 L1895 11Z" fill="#4fc0c8"/><line x1="1725" y1="416.5" x2="1811" y2="416.5" stroke="#8a8a8a" stroke-dasharray="1 2"/><path d="M1800 476 L1806 471 L1810 476 L1804 481Z" fill="#d8d8d8"/><path d="M1809 481 V473 M1806 476 L1809 472 L1812 476" stroke="#4fc0c8" stroke-width="1.8" fill="none"/><path d="M1823 476 L1829 471 L1833 476 L1827 481Z" fill="#d8d8d8"/><path d="M1832 471 V479 M1829 476 L1832 480 L1835 476" stroke="#4fc0c8" stroke-width="1.8" fill="none"/><path d="M1849 476 L1855 471 L1859 476 L1853 481Z" fill="#d8d8d8"/><path d="M1860 469 V477 M1856 473 H1864" stroke="#4fc0c8" stroke-width="2" fill="none"/><path d="M1873 476 L1879 471 L1883 476 L1877 481Z" fill="#d8d8d8"/><circle cx="1884" cy="473" r="3.5" fill="#4fc0c8"/><path d="M1654 735 V745 L1649 740Z" fill="#cfcfcf"/><rect x="1658" y="736" width="154" height="10" rx="5" fill="#5c5c5c"/><path d="M1885 735 V745 L1890 740Z" fill="#cfcfcf"/><rect x="1641.5" y="421.5" width="254" height="328" fill="none" stroke="#3a3a3a"/></svg>
<div class="t" style="left:1649px;top:29px;color:#cfcfcf;font-size:11px;">Channels</div>
<div class="t" style="left:1712px;top:29px;color:#cfcfcf;font-size:11px;">Edit</div>
<div class="t" style="left:1747px;top:29px;color:#cfcfcf;font-size:11px;">Object</div>
<div class="t" style="left:1796px;top:29px;color:#cfcfcf;font-size:11px;">Show</div>
<div class="t" style="left:1653px;top:430px;color:#e0e0e0;font-size:11px;">Display</div>
<div class="t" style="left:1714px;top:430px;color:#9a9a9a;font-size:11px;">Anim</div>
<div class="t" style="left:1652px;top:449px;color:#cfcfcf;font-size:11px;">Layers</div>
<div class="t" style="left:1698px;top:449px;color:#cfcfcf;font-size:11px;">Options</div>
<div class="t" style="left:1755px;top:449px;color:#cfcfcf;font-size:11px;">Help</div>
<div class="a" style="left:1897px;top:0px;width:17px;height:151px;background:#444;"></div>
<div class="a" style="left:1897px;top:159px;width:17px;height:105px;background:#3f3f3f;"></div>
<div class="a" style="left:1897px;top:278px;width:17px;height:92px;background:#3f3f3f;"></div>
<div class="t" style="left:1901px;top:14px;color:#e6e6e6;font-size:11px;letter-spacing:0.12px;writing-mode:vertical-rl;">Channel Box / Layer Editor</div>
<div class="t" style="left:1901px;top:170px;color:#9a9a9a;font-size:11px;letter-spacing:0.55px;writing-mode:vertical-rl;">Modeling Toolkit</div>
<div class="t" style="left:1901px;top:283px;color:#9a9a9a;font-size:11px;letter-spacing:0.6px;writing-mode:vertical-rl;">Attribute Editor</div>
<svg width="1914" height="835"><line x1="2.5" y1="761" x2="2.5" y2="791" stroke="#8a8a8a" stroke-dasharray="1 2"/><rect x="9" y="761" width="9" height="30" fill="#262626"/><rect x="18" y="761" width="11" height="30" fill="#5a5a5a"/><rect x="69.5" y="774" width="1.6" height="13" fill="#a8a8a8"/><rect x="136.0" y="774" width="1.6" height="13" fill="#a8a8a8"/><rect x="202.5" y="774" width="1.6" height="13" fill="#a8a8a8"/><rect x="269.0" y="774" width="1.6" height="13" fill="#a8a8a8"/><rect x="335.5" y="774" width="1.6" height="13" fill="#a8a8a8"/><rect x="402.0" y="774" width="1.6" height="13" fill="#a8a8a8"/><rect x="468.5" y="774" width="1.6" height="13" fill="#a8a8a8"/><rect x="535.0" y="774" width="1.6" height="13" fill="#a8a8a8"/><rect x="601.5" y="774" width="1.6" height="13" fill="#a8a8a8"/><rect x="668.0" y="774" width="1.6" height="13" fill="#a8a8a8"/><rect x="734.5" y="774" width="1.6" height="13" fill="#a8a8a8"/><rect x="801.0" y="774" width="1.6" height="13" fill="#a8a8a8"/><rect x="867.5" y="774" width="1.6" height="13" fill="#a8a8a8"/><rect x="934.0" y="774" width="1.6" height="13" fill="#a8a8a8"/><rect x="1000.5" y="774" width="1.6" height="13" fill="#a8a8a8"/><rect x="1067.0" y="774" width="1.6" height="13" fill="#a8a8a8"/><rect x="1133.5" y="774" width="1.6" height="13" fill="#a8a8a8"/><rect x="1200.0" y="774" width="1.6" height="13" fill="#a8a8a8"/><rect x="1266.5" y="774" width="1.6" height="13" fill="#a8a8a8"/><rect x="1333.0" y="774" width="1.6" height="13" fill="#a8a8a8"/><rect x="1399.5" y="774" width="1.6" height="13" fill="#a8a8a8"/><rect x="1466.0" y="774" width="1.6" height="13" fill="#a8a8a8"/><rect x="1532.5" y="774" width="1.6" height="13" fill="#a8a8a8"/><rect x="1599.0" y="774" width="1.6" height="13" fill="#a8a8a8"/></svg>
<div class="t" style="left:20px;top:775px;color:#f0f0f0;font-size:11px;">1</div>
<div class="t" style="left:73px;top:761px;color:#a0a0a0;font-size:11px;">5</div>
<div class="t" style="left:140px;top:761px;color:#a0a0a0;font-size:11px;">10</div>
<div class="t" style="left:206px;top:761px;color:#a0a0a0;font-size:11px;">15</div>
<div class="t" style="left:272px;top:761px;color:#a0a0a0;font-size:11px;">20</div>
<div class="t" style="left:339px;top:761px;color:#a0a0a0;font-size:11px;">25</div>
<div class="t" style="left:406px;top:761px;color:#a0a0a0;font-size:11px;">30</div>
<div class="t" style="left:472px;top:761px;color:#a0a0a0;font-size:11px;">35</div>
<div class="t" style="left:538px;top:761px;color:#a0a0a0;font-size:11px;">40</div>
<div class="t" style="left:605px;top:761px;color:#a0a0a0;font-size:11px;">45</div>
<div class="t" style="left:672px;top:761px;color:#a0a0a0;font-size:11px;">50</div>
<div class="t" style="left:738px;top:761px;color:#a0a0a0;font-size:11px;">55</div>
<div class="t" style="left:804px;top:761px;color:#a0a0a0;font-size:11px;">60</div>
<div class="t" style="left:871px;top:761px;color:#a0a0a0;font-size:11px;">65</div>
<div class="t" style="left:938px;top:761px;color:#a0a0a0;font-size:11px;">70</div>
<div class="t" style="left:1004px;top:761px;color:#a0a0a0;font-size:11px;">75</div>
<div class="t" style="left:1070px;top:761px;color:#a0a0a0;font-size:11px;">80</div>
<div class="t" style="left:1137px;top:761px;color:#a0a0a0;font-size:11px;">85</div>
<div class="t" style="left:1204px;top:761px;color:#a0a0a0;font-size:11px;">90</div>
<div class="t" style="left:1270px;top:761px;color:#a0a0a0;font-size:11px;">95</div>
<div class="t" style="left:1336px;top:761px;color:#a0a0a0;font-size:11px;">100</div>
<div class="t" style="left:1403px;top:761px;color:#a0a0a0;font-size:11px;">105</div>
<div class="t" style="left:1470px;top:761px;color:#a0a0a0;font-size:11px;">110</div>
<div class="t" style="left:1536px;top:761px;color:#a0a0a0;font-size:11px;">115</div>
<div class="t" style="left:1602px;top:761px;color:#a0a0a0;font-size:11px;">120</div>
<div class="a" style="left:1628px;top:767px;width:88px;height:18px;background:#2b2b2b;border-radius:2px"></div>
<div class="t" style="left:1634px;top:771px;color:#e0e0e0;font-size:11px;">1</div>
<svg width="1914" height="835"><rect x="1726" y="768" width="2" height="15" fill="#d0d0d0"/><path d="M1735 768 L1729 775.5 L1735 783Z" fill="#d0d0d0"/><path d="M1742 768 L1736 775.5 L1742 783Z" fill="#d0d0d0"/><rect x="1751" y="768" width="2" height="15" fill="#d0d0d0"/><path d="M1766 768 L1754 775.5 L1766 783Z" fill="#d0d0d0"/><line x1="1773.5" y1="764" x2="1773.5" y2="787" stroke="#d0d0d0" stroke-dasharray="1 1.5"/><rect x="1772" y="768" width="3" height="15" fill="#e07838"/><path d="M1786 768 L1777 775.5 L1786 783Z" fill="#d0d0d0"/><path d="M1810 768 L1796 775.5 L1810 783Z" fill="#d0d0d0"/><path d="M1819 768 L1832 775.5 L1819 783Z" fill="#d0d0d0"/><path d="M1842 768 L1852 775.5 L1842 783Z" fill="#d0d0d0"/><line x1="1854.5" y1="764" x2="1854.5" y2="787" stroke="#d0d0d0" stroke-dasharray="1 1.5"/><rect x="1853" y="768" width="3" height="15" fill="#e07838"/><path d="M1865 768 L1876 775.5 L1865 783Z" fill="#d0d0d0"/><rect x="1877" y="768" width="2" height="15" fill="#d0d0d0"/><path d="M1886 768 L1892 775.5 L1886 783Z" fill="#d0d0d0"/><path d="M1893 768 L1899 775.5 L1893 783Z" fill="#d0d0d0"/><rect x="1900" y="768" width="2" height="15" fill="#d0d0d0"/></svg>
<svg width="1914" height="835"><line x1="2.5" y1="798" x2="2.5" y2="828" stroke="#8a8a8a" stroke-dasharray="1 2"/><rect x="10" y="802" width="87" height="24" rx="3" fill="#2b2b2b"/><rect x="106" y="802" width="87" height="24" rx="3" fill="#2b2b2b"/><rect x="201" y="801" width="921" height="26" fill="#3a3a3a"/><rect x="205" y="803" width="558" height="21" rx="2" fill="#5e5e5e" stroke="#4a4a4a"/><rect x="210" y="807" width="15" height="14" rx="3" fill="#939393"/><rect x="744" y="807" width="15" height="14" rx="3" fill="#939393"/><rect x="1128" y="802" width="88" height="24" rx="2" fill="#2b2b2b"/><rect x="1224" y="802" width="88" height="24" rx="2" fill="#2b2b2b"/><rect x="1316.25" y="803" width="1.5" height="22" fill="#8a8a8a"/><rect x="1315.5" y="811.0" width="3" height="6" rx="1" fill="#9a9a9a"/><rect x="1360.25" y="803" width="1.5" height="22" fill="#8a8a8a"/><rect x="1359.5" y="811.0" width="3" height="6" rx="1" fill="#9a9a9a"/><rect x="1633.25" y="803" width="1.5" height="22" fill="#8a8a8a"/><rect x="1632.5" y="811.0" width="3" height="6" rx="1" fill="#9a9a9a"/><rect x="1815.25" y="803" width="1.5" height="22" fill="#8a8a8a"/><rect x="1814.5" y="811.0" width="3" height="6" rx="1" fill="#9a9a9a"/><path d="M1335 804 H1344 V820 L1339.5 815 L1335 820Z" fill="#e07838"/><path d="M1346 802 V812 M1341 807 H1351" stroke="#f0f0f0" stroke-width="2"/><path d="M1377 811 L1388 811 L1382.5 817Z" fill="none" stroke="#c8c8c8" stroke-width="1.2"/><path d="M1506 811 L1517 811 L1511.5 817Z" fill="none" stroke="#c8c8c8" stroke-width="1.2"/><rect x="1394.5" y="803.5" width="99" height="22" rx="2" fill="#444" stroke="#3c3c3c"/><rect x="1523.5" y="803.5" width="99" height="22" rx="2" fill="#444" stroke="#3c3c3c"/><rect x="1648" y="803" width="95" height="20" fill="#595959"/><rect x="1722" y="803" width="1" height="20" fill="#4a4a4a"/><path d="M1728 810 L1738 810 L1733 815Z" fill="#e0e0e0"/><path d="M1759 816 V813.5 A3.5 3.5 0 0 1 1762.5 810 H1770 M1771.5 812 V814.5 A3.5 3.5 0 0 1 1768 818 H1760.5" fill="none" stroke="#d0d0d0" stroke-width="2"/><path d="M1769 806.5 L1774 810 L1769 813.5Z M1762 814.5 L1757 818 L1762 821.5Z" fill="#d0d0d0"/><rect x="1783" y="803" width="23" height="23" fill="#4f8ab8"/><rect x="1786" y="808" width="16" height="13" fill="#2a2a2a" stroke="#e8904a" stroke-width="1.5"/><path d="M1787 809.5 H1801 M1787 819.5 H1801" stroke="#e8904a" stroke-width="1" stroke-dasharray="1.5 1"/><rect x="1788" y="812" width="3" height="4" fill="#e0e0e0"/><rect x="1792.5" y="812" width="3" height="4" fill="#e0e0e0"/><path d="M1797 805 L1803 809 L1803 815 L1797 817Z" fill="#d8d8d8"/><path d="M1830 811 H1833 L1839 806 V822 L1833 817 H1830Z" fill="#d0d0d0"/><path d="M1841 811 A3.5 3.5 0 0 1 1841 817 M1843 808 A6.5 6.5 0 0 1 1843 820 M1845 806 A8.5 8.5 0 0 1 1845 822" fill="none" stroke="#d0d0d0" stroke-width="1"/><rect x="1856" y="803" width="23" height="23" fill="#c83a38"/><path d="M1861 810 A7 7 0 0 1 1874 811 M1874 818 A7 7 0 0 1 1861 817" fill="none" stroke="#f0c8c8" stroke-width="1.3"/><path d="M1859 810 L1863 807 L1863 812Z M1876 818 L1872 821 L1872 816Z" fill="#f0c8c8"/><rect x="1866.5" y="809" width="2.5" height="10" fill="#f0a060"/><path d="M1861 814 H1865 M1870 814 H1874" stroke="#f0c8c8" stroke-width="1.2"/><circle cx="1890" cy="809" r="3.2" fill="none" stroke="#c8c8c8" stroke-width="2"/><circle cx="1890" cy="809" r="5" fill="none" stroke="#c8c8c8" stroke-width="1.2" stroke-dasharray="1.3 1.3"/><circle cx="1900" cy="809" r="1.8" fill="#e89060"/><path d="M1898 812 L1895 817 L1891 821 M1897 815 L1901 818 L1899 823 M1898 812 L1902 814" stroke="#e89060" stroke-width="2" fill="none"/></svg>
<div class="t" style="left:16px;top:810px;color:#e0e0e0;font-size:11px;">1</div>
<div class="t" style="left:112px;top:810px;color:#e0e0e0;font-size:11px;">1</div>
<div class="t" style="left:229px;top:809px;color:#e8e8e8;font-size:11px;">1</div>
<div class="t" style="left:723px;top:809px;color:#e8e8e8;font-size:11px;">120</div>
<div class="t" style="left:1133px;top:810px;color:#e0e0e0;font-size:11px;">120</div>
<div class="t" style="left:1229px;top:810px;color:#e0e0e0;font-size:11px;">200</div>
<div class="t" style="left:1399px;top:809px;color:#d0d0d0;font-size:11px;">No Character Set</div>
<div class="t" style="left:1528px;top:809px;color:#d0d0d0;font-size:11px;">No Anim Layer</div>
<div class="t" style="left:1651px;top:808px;color:#d0d0d0;font-size:11px;">24 fps</div>
</body></html>
